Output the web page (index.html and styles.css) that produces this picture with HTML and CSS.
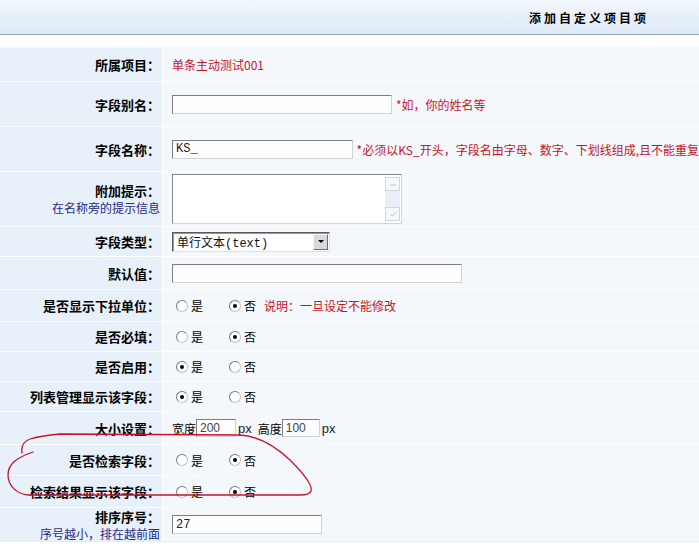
FILE: index.html
```html
<!DOCTYPE html>
<html lang="zh-CN">
<head>
<meta charset="utf-8">
<title>添加自定义项目项</title>
<link rel="stylesheet" href="styles.css">
</head>
<body>
<div class="page">
  <div class="header"><span class="title">添加自定义项目项</span></div>
  <div class="form">
    <div class="lab">所属项目：</div>
    <div class="val"><span class="red">单条主动测试001</span></div>

    <div class="lab">字段别名：</div>
    <div class="val"><span class="txt w220"></span><span class="red note-after">*如，你的姓名等</span></div>

    <div class="lab">字段名称：</div>
    <div class="val"><span class="txt w220">KS_</span><span class="red note-after">*必须以KS_开头，字段名由字母、数字、下划线组成,且不能重复</span></div>

    <div class="lab">附加提示：<span class="hint">在名称旁的提示信息</span></div>
    <div class="val">
      <div class="area">
        <div class="sb">
          <span class="sbb"><svg width="8" height="6" viewBox="0 0 8 6"><path d="M1 4 L7 4" stroke="#b9c2ce" stroke-width="1"/></svg></span>
          <span class="sbt"></span>
          <span class="sbb"><svg width="8" height="6" viewBox="0 0 8 6"><path d="M2 4 L4 5 L7 1" stroke="#b9c2ce" stroke-width="1" fill="none"/></svg></span>
        </div>
      </div>
    </div>

    <div class="lab">字段类型：</div>
    <div class="val"><div class="select"><span class="sel-text">单行文本(text)</span><span class="sel-btn"><span class="tri"></span></span></div></div>

    <div class="lab">默认值：</div>
    <div class="val"><span class="txt w290"></span></div>

    <div class="lab">是否显示下拉单位：</div>
    <div class="val"><span class="opt"><span class="radio"></span>是</span><span class="opt"><span class="radio on"></span>否</span><span class="red note-radio">说明：一旦设定不能修改</span></div>

    <div class="lab">是否必填：</div>
    <div class="val"><span class="opt"><span class="radio"></span>是</span><span class="opt"><span class="radio on"></span>否</span></div>

    <div class="lab">是否启用：</div>
    <div class="val"><span class="opt"><span class="radio on"></span>是</span><span class="opt"><span class="radio"></span>否</span></div>

    <div class="lab">列表管理显示该字段：</div>
    <div class="val"><span class="opt"><span class="radio on"></span>是</span><span class="opt"><span class="radio"></span>否</span></div>

    <div class="lab">大小设置：</div>
    <div class="val">宽度<span class="txt small w40">200</span><span class="px">px</span><span class="gap-lab">高度</span><span class="txt small w38">100</span><span class="px">px</span></div>

    <div class="lab">是否检索字段：</div>
    <div class="val"><span class="opt"><span class="radio"></span>是</span><span class="opt"><span class="radio on"></span>否</span></div>

    <div class="lab">检索结果显示该字段：</div>
    <div class="val"><span class="opt"><span class="radio"></span>是</span><span class="opt"><span class="radio on"></span>否</span></div>

    <div class="lab tight">排序序号：<span class="hint">序号越小，排在越前面</span></div>
    <div class="val"><span class="txt w150">27</span></div>
  </div>

  <svg class="mark" width="699" height="557" viewBox="0 0 699 557">
    <path d="M22 453 C21 447 22 442 30 439 C40 436 50 435 60 434 L240 435 C258 436 275 446 290 460 C303 473 313 485 311 491 C310 494 306 495 300 495 L28 495 C16 494 8 485 8 475 C8 465 15 458 33 452" fill="none" stroke="#c4142a" stroke-width="1.3" stroke-linecap="round" stroke-linejoin="round"/>
  </svg>
</div>
</body>
</html>
```

FILE: styles.css
```css
html, body {
  margin: 0;
  padding: 0;
  background: #ffffff;
}

body {
  font-family: "Noto Sans CJK SC", "Noto Sans", "Liberation Sans", sans-serif;
  font-size: 12px;
  color: #000;
}

.page {
  position: relative;
  width: 699px;
  height: 557px;
  overflow: hidden;
}

.header {
  height: 34px;
  border-bottom: 1px solid #98aabb;
  background: linear-gradient(#f2f7fc, #dde9f6);
  display: flex;
  align-items: center;
  justify-content: flex-end;
  padding-right: 50px;
}

.title {
  font-weight: bold;
  letter-spacing: 3px;
}

.form {
  margin-top: 12px;
  display: grid;
  grid-template-columns: 162px minmax(0, 1fr);
  grid-template-rows: 33px 44px 44px 54px 29px 32px 31px 29px 29px 29px 32px 30px 31px 33px;
  gap: 1px;
  background: #fbfdff;
  border-top: 1px solid #f6f9fd;
  border-bottom: 1px solid #e3ebf4;
}

.lab {
  background: #e8f0fa;
  display: flex;
  flex-direction: column;
  justify-content: center;
  align-items: flex-end;
  padding-right: 2px;
  font-weight: bold;
  font-size: 13px;
  line-height: 17px;
  white-space: nowrap;
}

.lab.tight {
  line-height: 17px;
  overflow: visible;
}

.hint {
  font-weight: normal;
  font-size: 12px;
  color: #1c2b8e;
}

.val {
  background: #f4f8fd;
  display: flex;
  align-items: center;
  padding-left: 9px;
  white-space: nowrap;
  overflow: hidden;
}

.red {
  color: #c3151f;
}

.note-after {
  margin-left: 4px;
}

.txt {
  display: inline-flex;
  align-items: center;
  box-sizing: border-box;
  height: 19px;
  padding-left: 3px;
  border: 1px solid;
  border-color: #7d7d7d #d2d2d2 #d2d2d2 #7d7d7d;
  background: #fdfdfd;
  font-family: "Liberation Mono", "DejaVu Sans Mono", monospace;
  font-size: 12px;
  color: #222;
}

.txt.small {
  height: 18px;
  font-family: "Liberation Sans", sans-serif;
  color: #444;
}

.w220 { width: 220px; }
.w290 { width: 290px; }
.w150 { width: 150px; }
.w40 { width: 40px; }
.w38 { width: 38px; }

.px {
  margin-left: 2px;
  font-family: "Liberation Sans", sans-serif;
  font-size: 13px;
  color: #222;
}

.gap-lab {
  margin-left: 6px;
}

.area {
  box-sizing: border-box;
  width: 230px;
  height: 50px;
  border: 1px solid;
  border-color: #868686 #d5d5d5 #d5d5d5 #868686;
  background: #fff;
  display: flex;
  justify-content: flex-end;
  padding: 2px 1px 2px 0;
}

.sb {
  width: 15px;
  display: flex;
  flex-direction: column;
  background: #e9eff8;
}

.sbb {
  box-sizing: border-box;
  height: 14px;
  border: 1px solid #ccd5e2;
  background: #f6f8fb;
  display: flex;
  align-items: center;
  justify-content: center;
}

.sbt {
  flex: 1;
}

.select {
  box-sizing: border-box;
  width: 158px;
  height: 20px;
  border: 1px solid;
  border-color: #5a5a5a #e0e0e0 #e0e0e0 #5a5a5a;
  box-shadow: inset 1px 1px 0 #9a9a9a;
  background: #fff;
  display: flex;
  align-items: stretch;
  padding: 1px;
}

.sel-text {
  flex: 1;
  display: flex;
  align-items: center;
  padding-left: 3px;
  color: #111;
  font-family: "Liberation Mono", "Noto Sans CJK SC", monospace;
}

.sel-btn {
  box-sizing: border-box;
  width: 15px;
  background: #d9d9d9;
  border: 1px solid;
  border-color: #f4f4f4 #6e6e6e #6e6e6e #f4f4f4;
  display: flex;
  align-items: center;
  justify-content: center;
}

.tri {
  width: 0;
  height: 0;
  border-left: 3px solid transparent;
  border-right: 3px solid transparent;
  border-top: 3px solid #000;
}

.opt {
  display: inline-flex;
  align-items: center;
  width: 53px;
}

.opt + .opt {
  width: auto;
}

.radio {
  box-sizing: border-box;
  width: 12px;
  height: 12px;
  margin-left: 4px;
  margin-right: 3px;
  border-radius: 50%;
  border: 1px solid;
  border-color: #7a7a7a #c4c4c4 #c4c4c4 #7a7a7a;
  background: #fff;
  display: inline-flex;
  align-items: center;
  justify-content: center;
}

.radio.on::after {
  content: "";
  width: 4px;
  height: 4px;
  border-radius: 50%;
  background: #000;
}

.note-radio {
  margin-left: 8px;
}

.mark {
  position: absolute;
  left: 0;
  top: 0;
  pointer-events: none;
}
```
